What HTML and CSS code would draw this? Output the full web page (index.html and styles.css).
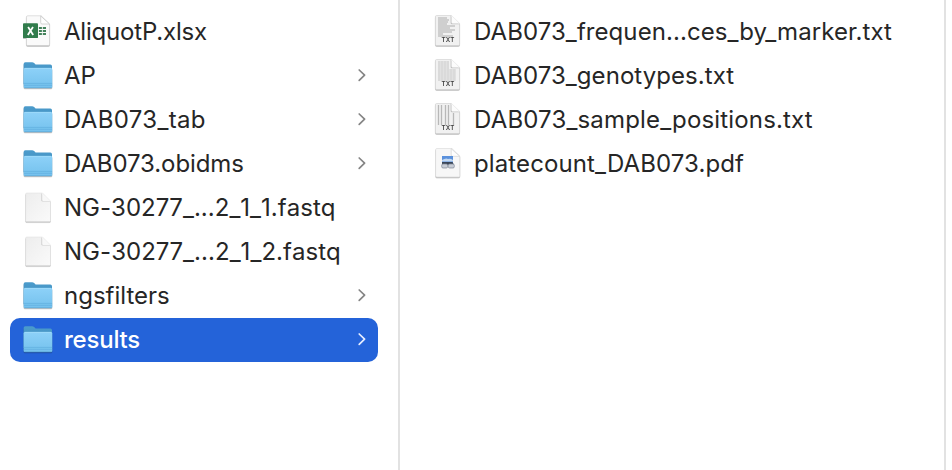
FILE: index.html
```
<!DOCTYPE html>
<html lang="en">
<head>
<meta charset="utf-8">
<title>results</title>
<link rel="stylesheet" href="styles.css">
</head>
<body>
<svg class="defs" aria-hidden="true">
  <defs>
    <linearGradient id="front" x1="0" y1="0" x2="0" y2="1"><stop offset="0" stop-color="#8dd1f8"/><stop offset="1" stop-color="#74c1ed"/></linearGradient>
    <linearGradient id="back" x1="0" y1="0" x2="0" y2="1"><stop offset="0" stop-color="#4b9bcb"/><stop offset="1" stop-color="#3e8dbe"/></linearGradient>
    <linearGradient id="paper" x1="0" y1="0" x2="1" y2="1"><stop offset="0" stop-color="#ededed"/><stop offset="1" stop-color="#fafafa"/></linearGradient>
    <symbol id="folder" viewBox="0 0 36 44">
      <path d="M3.6 10.2Q3.6 8.3 5.4 8.3H12.1Q13.3 8.3 14.1 9.1L15.6 10.5H30.3Q32 10.5 32 12.2V30H3.6Z" fill="url(#back)"/>
      <path d="M3.6 15.4Q3.6 14.1 4.9 14.1H30.9Q32.3 14.1 32.3 15.4V33Q32.3 34.1 31.2 34.1H4.7Q3.6 34.1 3.6 33Z" fill="url(#front)"/>
      <path d="M4.8 14.3H31.2" stroke="#a8e0fc" stroke-width=".7"/>
      <path d="M3.8 29.4H32.1M3.8 31.3H32.1" stroke="#5aaada" stroke-width=".6"/>
      <path d="M4.4 33.8H31.6" stroke="#5aa5d2" stroke-width=".7"/>
    </symbol>
    <symbol id="page" viewBox="0 0 36 44">
      <path d="M6.8 7H22.5L30.5 15V34.4Q30.5 35.6 29.3 35.6H6.8Q5.6 35.6 5.6 34.4V8.2Q5.6 7 6.8 7Z" fill="url(#paper)" stroke="#dedede" stroke-width=".5"/>
      <path d="M21.3 7.2L30.3 15.6H22.6Q21.3 15.6 21.3 14.3Z" fill="#cfcfcf"/>
      <path d="M22.2 7.2L30.3 15H23.2Q22.2 15 22.2 14Z" fill="#f8f8f8"/>
    </symbol>
    <symbol id="sheet" viewBox="0 0 36 44">
      <path d="M7.7 5.8H21.2L29.6 14V34.2Q29.6 35.5 28.3 35.5H7.7Q6.4 35.5 6.4 34.2V7.1Q6.4 5.8 7.7 5.8Z" fill="#fafafa" stroke="#c9c9c9" stroke-width=".6"/>
      <path d="M20.7 6V12.7Q20.7 14 22 14H29.5Z" fill="#fff" stroke="#bbb" stroke-width=".6"/>
      <path d="M18.9 17h3v2h-3zM22.8 17h3.2v2h-3.2zM18.9 20h3v2h-3zM22.8 20h3.2v2h-3.2zM18.9 23h3v2h-3zM22.8 23h3.2v2h-3.2z" fill="#43825b"/>
      <rect x="3" y="13.3" width="15" height="14.8" rx=".9" fill="#317c4c"/>
      <path d="M8.1 17L13.2 25M13 17L7.8 25" stroke="#fff" stroke-width="1.8"/>
    </symbol>
    <symbol id="textpage" viewBox="0 0 36 44">
      <path d="M6.7 5.5H21.5L29.6 13.4V34.2Q29.6 35.5 28.3 35.5H6.7Q5.4 35.5 5.4 34.2V6.8Q5.4 5.5 6.7 5.5Z" fill="#f1f1f1" stroke="#cecece" stroke-width=".6"/>
    </symbol>
    <symbol id="fold" viewBox="0 0 36 44">
      <path d="M20.6 5.5V12.9Q20.6 14.2 21.9 14.2H29.6Z" fill="#c2c2c2"/>
      <path d="M21.5 5.6V12.3Q21.5 13.4 22.6 13.4H29.4Z" fill="#fcfcfc"/>
    </symbol>
    <symbol id="chevron" viewBox="0 0 10 16"><path d="M2.2 2L7.6 7.2L2.2 12.4" fill="none" stroke="currentColor" stroke-width="1.7" stroke-linecap="round" stroke-linejoin="round"/></symbol>
  </defs>
</svg>
<main class="browser">
  <ul class="column column-parent">
    <li class="row"><svg class="icon"><use href="#sheet"/></svg><span class="name n-xlsx">AliquotP.xlsx</span></li>
    <li class="row"><svg class="icon"><use href="#folder"/></svg><span class="name">AP</span><svg class="chevron"><use href="#chevron"/></svg></li>
    <li class="row"><svg class="icon"><use href="#folder"/></svg><span class="name n-tab">DAB073_tab</span><svg class="chevron"><use href="#chevron"/></svg></li>
    <li class="row"><svg class="icon"><use href="#folder"/></svg><span class="name n-obi">DAB073.obidms</span><svg class="chevron"><use href="#chevron"/></svg></li>
    <li class="row"><svg class="icon"><use href="#page"/></svg><span class="name n-fq1">NG-30277_...2_1_1.fastq</span></li>
    <li class="row"><svg class="icon"><use href="#page"/></svg><span class="name n-fq2">NG-30277_...2_1_2.fastq</span></li>
    <li class="row"><svg class="icon"><use href="#folder"/></svg><span class="name">ngsfilters</span><svg class="chevron"><use href="#chevron"/></svg></li>
    <li class="row selected"><svg class="icon"><use href="#folder"/></svg><span class="name n-res">results</span><svg class="chevron"><use href="#chevron"/></svg></li>
  </ul>
  <ul class="column column-child">
    <li class="row"><svg class="icon" viewBox="0 0 36 44"><use href="#textpage"/><path d="M8 8h9M8 10h11M8 12h10M8 14h9M8 16h17M8 18h12M8 20h17M8 22h14M8 24h5M8 26h15" stroke="#adadad" stroke-width="1"/><use href="#fold"/><text class="tag" x="17.9" y="32.2" textLength="13">TXT</text></svg><span class="name n-freq">DAB073_frequen...ces_by_marker.txt</span></li>
    <li class="row"><svg class="icon" viewBox="0 0 36 44"><use href="#textpage"/><path d="M8 8h11M8 10h11M8 12h11M8 14h11M8 16h18M8 18h18M8 20h18M8 22h18M8 24h18M8 26h18" stroke="#cacaca" stroke-width=".8"/><path d="M9 7v20M12 7v20M15 7v20M18 7v20M21 15v12M24 15v12" stroke="#cfcfcf" stroke-width=".8"/><use href="#fold"/><text class="tag" x="17.9" y="32.2" textLength="13">TXT</text></svg><span class="name n-gen">DAB073_genotypes.txt</span></li>
    <li class="row"><svg class="icon" viewBox="0 0 36 44"><use href="#textpage"/><path d="M8.5 7v20M11.5 7v20M15.5 7v20M18.5 7v20M23.5 15v12" stroke="#b8b8b8" stroke-width="1.3"/><use href="#fold"/><text class="tag" x="17.9" y="32.2" textLength="13">TXT</text></svg><span class="name n-pos">DAB073_sample_positions.txt</span></li>
    <li class="row"><svg class="icon" viewBox="0 0 36 44"><path d="M7 6.5H22L29.8 14V33.8Q29.8 35 28.6 35H7Q5.6 35 5.6 33.8V7.8Q5.6 6.5 7 6.5Z" fill="#f7f7f7" stroke="#d8d8d8" stroke-width=".6"/><path d="M21.2 6.7V13Q21.2 14.3 22.4 14.3H29.6Z" fill="#fff" stroke="#ccc" stroke-width=".6"/><rect x="12" y="14" width="11" height="7.5" fill="#5b91dc"/><path d="M12 18Q16 15.5 18 17Q20 16 23 18V19.5H12Z" fill="#c5daf2"/><path d="M12 20h10.5l1.5 3H12Z" fill="#3a4658"/><rect x="11.7" y="22" width="5.9" height="4" rx="1.3" fill="#c8cdd6" stroke="#7f8896" stroke-width=".7"/><rect x="18.3" y="22" width="6" height="4" rx="1.3" fill="#c8cdd6" stroke="#7f8896" stroke-width=".7"/></svg><span class="name n-pdf">platecount_DAB073.pdf</span></li>
  </ul>
</main>
</body>
</html>
```
FILE: styles.css
```
* { box-sizing: border-box; }
body { margin: 0; background: #fff; color: #262626; font-family: Inter, "Liberation Sans", sans-serif; }
.defs { position: absolute; width: 0; height: 0; }
.browser { display: flex; width: 952px; height: 470px; overflow: hidden; }
.column { margin: 0; padding: 10px 20px 0 10px; list-style: none; border-right: 2px solid #e2e2e2; }
.column-parent { width: 400px; }
.column-child { width: 546px; padding-left: 20px; }
.row { display: flex; align-items: center; height: 44px; padding: 0 10px; border-radius: 10px; }
.icon { flex: none; width: 36px; height: 44px; filter: drop-shadow(0 1px .7px rgba(0,0,0,.25)); }
.name { margin-left: 8px; font-size: 24px; line-height: 44px; white-space: nowrap; }
.n-xlsx { letter-spacing: -.19px; }
.n-tab { letter-spacing: .33px; }
.n-obi { letter-spacing: -.1px; }
.n-fq1 { letter-spacing: .02px; font-kerning: none; }
.n-fq2 { letter-spacing: .04px; font-kerning: none; }
.n-freq { letter-spacing: .07px; }
.n-gen { letter-spacing: .06px; }
.n-pos { letter-spacing: .16px; }
.n-pdf { letter-spacing: .11px; }
.n-res { letter-spacing: -.22px; }
.chevron { flex: none; width: 10px; height: 16px; margin-left: auto; margin-right: 1.5px; color: #858585; }
.selected { background: #2463d9; color: #fff; }
.selected .name { font-weight: 500; }
.selected .chevron { color: #e7eeff; }
.tag { font: 600 6.2px Inter, sans-serif; fill: #3c3c3c; text-anchor: middle; }
```
